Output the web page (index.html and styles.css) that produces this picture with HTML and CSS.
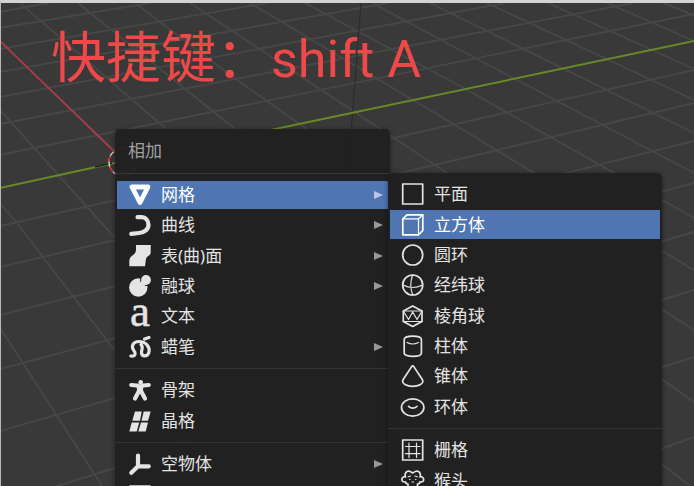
FILE: index.html
```html
<!DOCTYPE html>
<html lang="zh-CN">
<head>
<meta charset="utf-8">
<title>相加</title>
<link rel="stylesheet" href="styles.css">
</head>
<body>
<main class="viewport">
  <svg class="floor" viewBox="0 0 694 486" preserveAspectRatio="xMinYMin slice" aria-hidden="true">
    <g class="grid-lines">
      <path d="M0 12L48 3M0 28L150 3M0 49L267 3M0 72L388 3M0 97L505 3M0 124L633 3M0 155L694 14M0 226L460 123L694 70M0 267L460 159L694 103M0 315L694 141M0 369L694 183M0 431L694 232M57 486L694 290M300 486L694 357M560 486L694 437"/>
      <path d="M663 3L694 15M607 3L694 41M548 3L694 69M487 3L694 100M430 3L694 133M372 3L460 50L694 173M305 3L460 86L694 218M250 3L460 128L694 270M190 3L447 173L694 330M135 3L230 75L694 402M78 3L230 125L690 486M20 3L165 128M0 110L115 238M0 203L16 222L43 257L115 351M0 328L23 363L102 486"/>
    </g>
    <path class="axis-z" d="M361 3L348 173"/>
    <path class="axis-x" d="M0 41L118 155L430 486"/>
    <path class="axis-y" d="M0 188L110 164L280 128L694 41"/>
    <path class="cross" d="M95 167L112 163"/>
    <circle class="cursor-base" cx="123" cy="162" r="14"/>
    <circle class="cursor-dash" cx="123" cy="162" r="14"/>
  </svg>

  <h1 class="caption">快捷键：<span class="keys">shift A</span></h1>

  <nav class="menu menu-add" aria-label="相加">
    <h2 class="menu-title">相加</h2>
    <ul class="group six">
      <li><button class="item active" type="button"><svg class="icon solid" viewBox="0 0 24 24"><path class="line w5" d="M4 4H20L12 19.500Z"/></svg><span>网格</span><i class="arrow"></i></button></li>
      <li><button class="item" type="button"><svg class="icon solid" viewBox="0 0 24 24"><path class="line w4" d="M9.500 4.200H13C18 4.200 20.500 8 20.500 12S16.500 19.500 11 20L3.200 20.800"/></svg><span>曲线</span><i class="arrow"></i></button></li>
      <li><button class="item" type="button"><svg class="icon solid" viewBox="0 0 24 24"><path d="M8 1H22.700V8.500C22.700 12 18.500 12 18 15L17 22.300H1.300V18C1.300 10 7 13 8 6Z"/></svg><span>表(曲)面</span><i class="arrow"></i></button></li>
      <li><button class="item" type="button"><svg class="icon solid" viewBox="0 0 24 24"><circle cx="10.300" cy="13.500" r="9.200"/><circle class="gap" cx="18" cy="6" r="6"/><circle cx="18" cy="6" r="4.900"/><path d="M10.500 11L14 6L19 10L14 13.500Z"/></svg><span>融球</span><i class="arrow"></i></button></li>
      <li><button class="item" type="button"><svg class="icon solid" viewBox="0 0 24 24"><text class="letter" x="2" y="22">a</text></svg><span>文本</span></button></li>
      <li><button class="item" type="button"><svg class="icon solid" viewBox="0 0 24 24"><path class="line w3" d="M2.800 21C8 21.500 8 18 5.500 15C3 11 5 6.500 11 6.500C18 6.500 22 12 21 17C20 22 14 22 13.500 18C13 15 16 12.500 13 9.500M16.500 4L21 2.500"/></svg><span>蜡笔</span><i class="arrow"></i></button></li>
    </ul>
    <hr class="divider">
    <ul class="group two">
      <li><button class="item" type="button"><svg class="icon solid" viewBox="0 0 24 24"><circle cx="12.700" cy="4.200" r="2.300"/><path class="line w4" d="M3.200 7L9 7.500L12 9L15 7.500L20.800 7"/><path class="line w4" d="M7 20.500L11 13V9M17 20.500L13 13V9"/></svg><span>骨架</span></button></li>
      <li><button class="item" type="button"><svg class="icon solid" viewBox="0 0 24 24"><path d="M7 2.500H13.700L12 11.800H4.300ZM15.700 2.500H22.700L20 11.800H13.500ZM3.700 13.500H11.300L8.700 22.500H1.300ZM13 13.500H20L17.700 22.500H10.300Z"/></svg><span>晶格</span></button></li>
    </ul>
    <hr class="divider">
    <ul class="group two">
      <li><button class="item" type="button"><svg class="icon solid" viewBox="0 0 24 24"><path class="line w4" d="M10 3.500V14.300H20.800M10 14.300L3.300 20.800"/></svg><span>空物体</span><i class="arrow"></i></button></li>
      <li><button class="item" type="button" aria-label="图像"><svg class="icon" viewBox="0 0 24 24"><rect x="2" y="3" width="20" height="18"/></svg></button></li>
    </ul>
  </nav>

  <nav class="menu menu-mesh" aria-label="网格">
    <ul class="group eight">
      <li><button class="item" type="button"><svg class="icon" viewBox="0 0 24 24"><rect x="1.700" y="2" width="20" height="20"/></svg><span>平面</span></button></li>
      <li><button class="item active" type="button"><svg class="icon" viewBox="0 0 24 24"><path d="M1.800 5.800V21.800H17.500L21.800 17.500V1.800H6Z"/><path class="thin" d="M1.800 5.800H17.500V21.800M17.500 5.800L21.800 1.800"/></svg><span>立方体</span></button></li>
      <li><button class="item" type="button"><svg class="icon" viewBox="0 0 24 24"><circle cx="11.700" cy="12" r="10"/></svg><span>圆环</span></button></li>
      <li><button class="item" type="button"><svg class="icon" viewBox="0 0 24 24"><circle cx="11.700" cy="12" r="10"/><path class="thin" d="M2 12Q11.700 17 21.500 12M11.500 2Q8 13 11.700 22"/></svg><span>经纬球</span></button></li>
      <li><button class="item" type="button"><svg class="icon" viewBox="0 0 24 24"><path d="M11.700 2L21 7V17.500L11.700 22.500L2.300 17.500V7Z"/><path class="thin" d="M2.300 7H21M2.300 17.500H21M2.300 7L7.500 15.500L11.700 8L16 15.500L21 7"/></svg><span>棱角球</span></button></li>
      <li><button class="item" type="button"><svg class="icon" viewBox="0 0 24 24"><path d="M3.200 5.500C3.200 1 20.400 1 20.400 5.500V19C20.400 23.500 3.200 23.500 3.200 19Z"/><path class="thin" d="M6 8.500Q11.700 11.500 17.500 8.500"/></svg><span>柱体</span></button></li>
      <li><button class="item" type="button"><svg class="icon" viewBox="0 0 24 24"><path d="M10.600 2.600Q11.700 1.200 12.800 2.600L21.300 15.500C24 19.500 17 22.300 11.700 22.300S-.500 19.500 2.200 15.500Z"/></svg><span>锥体</span></button></li>
      <li><button class="item" type="button"><svg class="icon" viewBox="0 0 24 24"><ellipse cx="11.700" cy="12.500" rx="11.200" ry="8.700"/><path d="M7.500 11.300Q11.700 14.800 16 11.300"/></svg><span>环体</span></button></li>
    </ul>
    <hr class="divider">
    <ul class="group two">
      <li><button class="item" type="button"><svg class="icon" viewBox="0 0 24 24"><rect x="1.700" y="2" width="20" height="20"/><path class="thin" d="M8 5V19.500M15.500 5V19.500M4.500 8.500H19M4.500 15.700H19"/></svg><span>栅格</span></button></li>
      <li><button class="item" type="button"><svg class="icon" viewBox="0 0 24 24"><path d="M7 15C5 15 4.500 13.500 4.500 12.800C2 13.500.500 12 1 9.800C1.500 8 3 7.300 4.500 8C3 4 6 1.500 8.500 2.300C10 2.800 11 3.500 11.700 4C12.500 3.500 13.500 2.800 15 2.300C17.500 1.500 20.500 4 19 8C20.500 7.300 22 8 22.500 9.800C23 12 21.500 13.500 19 12.800C19 13.500 18.500 15 16.500 15C16.500 21 15 22.500 11.700 22.500S7 21 7 15Z"/><path class="thin" d="M7.200 7.800L9.500 7M14 7L16.300 7.800M8.500 10.500H9M14.500 10.500H15M11 13H12.500"/></svg><span>猴头</span></button></li>
    </ul>
  </nav>
</main>
</body>
</html>
```
FILE: styles.css
```css
* {
  box-sizing: border-box;
}

body {
  margin: 0;
  background: #393939;
  font-family: "Noto Sans", "Noto Sans CJK SC", sans-serif;
}

.viewport {
  position: relative;
  height: 100vh;
  overflow: hidden;
  border-top: 3px solid #d3d3d3;
  border-left: 1px solid #b8b8b8;
}

.floor {
  position: absolute;
  top: -3px;
  left: -1px;
  width: 100vw;
  height: 100vh;
  fill: none;
  z-index: -1;
}

.grid-lines {
  stroke: #474747;
  stroke-width: 1.9;
}

.axis-x {
  stroke: #a83b4c;
  stroke-width: 1.9;
}

.axis-y {
  stroke: #668a26;
  stroke-width: 2;
}

.axis-z {
  stroke: #2a2a2a;
}

.cross {
  stroke: #1c2410;
  stroke-width: 1.5;
}

.cursor-base {
  stroke: #e8e8e8;
  stroke-width: 1.3;
}

.cursor-dash {
  stroke: #d02020;
  stroke-width: 1.5;
  stroke-dasharray: 6 5;
}

.caption {
  margin: 0;
  padding: 15px 0 0 50px;
  color: #ee4848;
  font: 400 55px/80px Roboto, "Noto Sans CJK SC", sans-serif;
  white-space: nowrap;
}

.keys {
  font-size: 52px;
}

.menu {
  position: absolute;
  border-radius: 5px;
  background: rgb(32 32 32 / 97%);
  box-shadow: 0 1px 5px rgb(0 0 0 / 45%);
}

.menu-add {
  top: 126px;
  left: 114px;
  width: 275px;
}

.menu-mesh {
  top: 170px;
  left: 387px;
  width: 274px;
  padding-top: 6px;
}

.menu-title {
  margin: 0 0 6px;
  padding-left: 13px;
  border-bottom: 1px solid #383838;
  color: #a0a0a0;
  font-size: 17px;
  font-weight: 400;
  line-height: 44px;
}

/* Rows share the height of their group equally. */
.group {
  display: grid;
  grid-auto-rows: 1fr;
  margin: 0;
  padding: 0 2px;
  list-style: none;
}

.group li {
  display: flex;
  min-height: 0;
}

.two {
  height: 61px;
}

.six {
  height: 182px;
}

.eight {
  height: 243px;
}

.divider {
  height: 1px;
  margin: 6px 0;
  border: 0;
  background: #343434;
}

.item {
  display: flex;
  flex: 1;
  align-items: center;
  gap: 9px;
  margin: 1px 0;
  padding: 0 5px 0 11px;
  border: 0;
  background: none;
  color: #e4e4e4;
  font-family: inherit;
  font-size: 17px;
  line-height: 24px;
  text-align: left;
}

.item.active {
  background: #4f76b3;
  color: #fff;
}

.icon {
  flex: none;
  width: 24px;
  height: 24px;
  overflow: visible;
  fill: none;
  stroke: currentColor;
  stroke-width: 1.7;
  stroke-linejoin: round;
  stroke-linecap: round;
}

.icon.solid {
  fill: currentColor;
  stroke: none;
}

.icon .thin {
  stroke-width: 1.2;
}

.icon .line {
  fill: none;
  stroke: currentColor;
}

.icon .w3 {
  stroke-width: 3.2;
}

.icon .w4 {
  stroke-width: 4.2;
}

.icon .w5 {
  stroke-width: 4.8;
}

.icon .gap {
  fill: #212121;
}

.letter {
  font-family: "Liberation Serif", serif;
  font-size: 45px;
  stroke: currentColor;
  stroke-width: 0.5;
}

.arrow {
  margin-left: auto;
  border-style: solid;
  border-width: 4px 0 4px 9px;
  border-color: transparent transparent transparent #999;
}

.active .arrow {
  border-left-color: #b9c8e0;
}
```
